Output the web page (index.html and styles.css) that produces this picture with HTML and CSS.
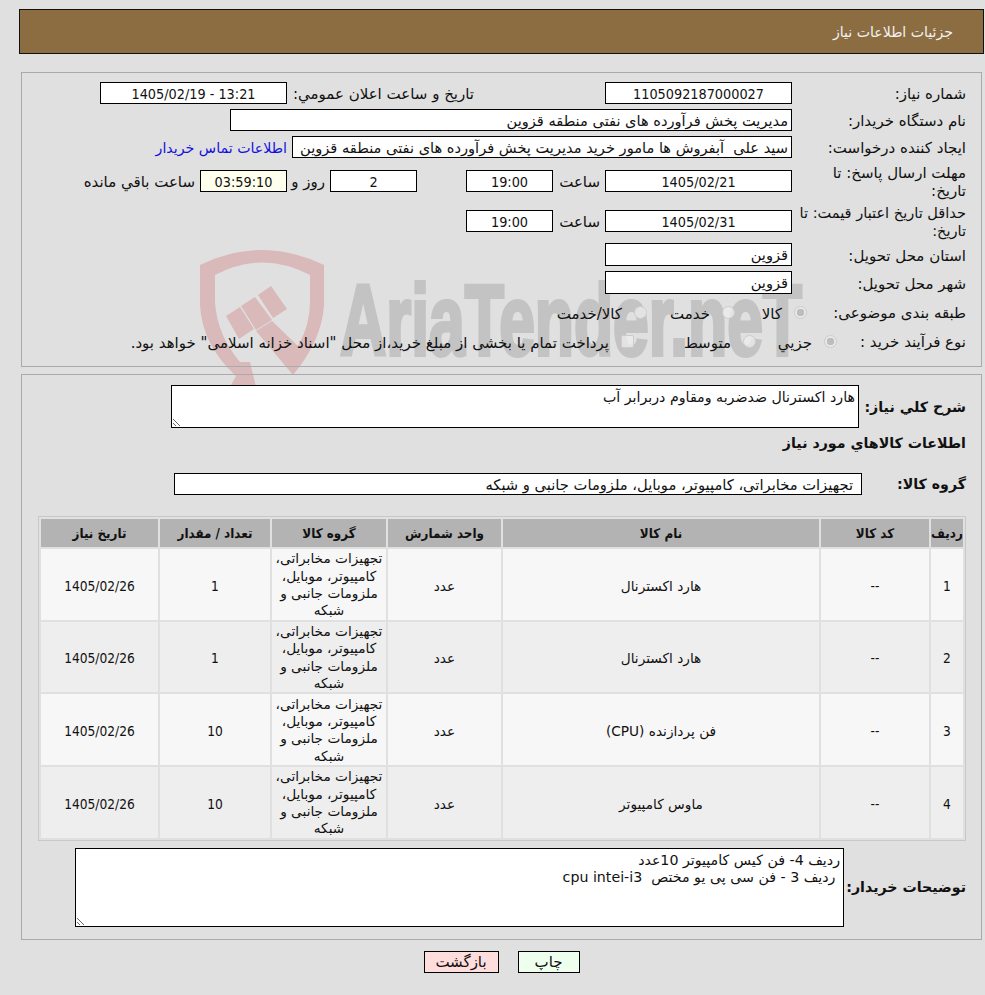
FILE: index.html
```html
<!DOCTYPE html>
<html lang="fa" dir="rtl">
<head>
<meta charset="utf-8">
<title>جزئیات اطلاعات نیاز</title>
<link rel="stylesheet" href="styles.css">
</head>
<body>
<svg class="watermark" viewBox="0 0 985 995" width="985" height="995" aria-hidden="true">
  <path class="wm-red" fill-rule="evenodd" d="M200 265 Q262 235 324 265 L324 305 Q322 340 293 375 L282 360 L272 321 L298 346 Q310 325 310 302 L310 275 Q262 250 215 275 L215 302 Q217 335 240 362 L250 362 L256 387 L231 385 L236 376 Q202 345 200 305 Z"/>
  <path class="wm-red" d="M226 316 L240 307 L254 329 L239 339 Z M241 306 L255 297 L272 320 L256 330 Z M258 295 L271 286 L287 309 L273 318 Z M256 331 L272 321 L300 361 L293 375 Z"/>
  <text class="wm-text" x="340" y="355" textLength="462" lengthAdjust="spacingAndGlyphs" direction="ltr">AriaTender.neT</text>
</svg>
<main class="page">
  <header class="title-bar"><h1 class="title">جزئیات اطلاعات نیاز</h1></header>

  <section class="panel panel-info">
    <div class="row">
      <span class="label">شماره نیاز:</span>
      <div class="box w187 center num">1105092187000027</div>
      <span class="label-public">تاریخ و ساعت اعلان عمومي:</span>
      <div class="box w187 center num">13:21 - 1405/02/19</div>
    </div>
    <div class="row">
      <span class="label">نام دستگاه خریدار:</span>
      <div class="box w562">مدیریت پخش فرآورده های نفتی منطقه قزوین</div>
    </div>
    <div class="row">
      <span class="label">ایجاد کننده درخواست:</span>
      <div class="box w500 nowrap">سید علی&nbsp; آبفروش ها مامور خرید مدیریت پخش فرآورده های نفتی منطقه قزوین</div>
      <a class="contact" href="#">اطلاعات تماس خریدار</a>
    </div>
    <div class="row row-tall">
      <span class="label">مهلت ارسال پاسخ: تا<br>تاریخ:</span>
      <div class="box w187 center num">1405/02/21</div>
      <span class="time-word">ساعت</span>
      <div class="box w87 center num">19:00</div>
      <div class="box w87 center num days">2</div>
      <span class="days-word">روز و</span>
      <div class="box w87 center num remain">03:59:10</div>
      <span class="remain-word">ساعت باقي مانده</span>
    </div>
    <div class="row row-tall">
      <span class="label label-long">حداقل تاریخ اعتبار قیمت: تا<br>تاریخ:</span>
      <div class="box w187 center num">1405/02/31</div>
      <span class="time-word">ساعت</span>
      <div class="box w87 center num">19:00</div>
    </div>
    <div class="row">
      <span class="label">استان محل تحویل:</span>
      <div class="box w187 tall">قزوین</div>
    </div>
    <div class="row">
      <span class="label">شهر محل تحویل:</span>
      <div class="box w187 tall">قزوین</div>
    </div>
    <div class="row row-choice row-subject">
      <span class="label">طبقه بندی موضوعی:</span>
      <label class="choice choice-goods"><input class="radio" type="radio" name="subject" checked disabled><span class="choice-text">کالا</span></label>
      <label class="choice choice-service"><input class="radio" type="radio" name="subject" disabled><span class="choice-text">خدمت</span></label>
      <label class="choice"><input class="radio" type="radio" name="subject" disabled><span class="choice-text">کالا/خدمت</span></label>
    </div>
    <div class="row row-choice row-process">
      <span class="label">نوع فرآیند خرید :</span>
      <label class="choice choice-partial"><input class="radio" type="radio" name="process" checked disabled><span class="choice-text">جزيي</span></label>
      <label class="choice choice-medium"><input class="radio" type="radio" name="process" disabled><span class="choice-text">متوسط</span></label>
      <label class="choice"><input class="check" type="checkbox" disabled><span class="choice-text">پرداخت تمام یا بخشی از مبلغ خرید،از محل "اسناد خزانه اسلامی" خواهد بود.</span></label>
    </div>
  </section>

  <section class="panel panel-goods">
    <div class="form-line">
      <span class="strong-label desc-label">شرح کلي نیاز:</span>
      <textarea class="area area-desc" readonly>هارد اکسترنال ضدضربه ومقاوم دربرابر آب</textarea>
    </div>
    <h2 class="strong-label heading">اطلاعات کالاهاي مورد نیاز</h2>
    <div class="form-line group-row">
      <span class="strong-label group-label">گروه کالا:</span>
      <div class="box w688 group-box">تجهیزات مخابراتی، کامپیوتر، موبایل، ملزومات جانبی و شبکه</div>
    </div>
    <table class="items">
      <thead>
        <tr>
          <th class="c-row">ردیف</th><th class="c-code">کد کالا</th><th class="c-name">نام کالا</th><th class="c-unit">واحد شمارش</th><th class="c-group">گروه کالا</th><th class="c-qty">تعداد / مقدار</th><th class="c-date">تاریخ نیاز</th>
        </tr>
      </thead>
      <tbody>
        <tr><td class="num">1</td><td class="num">--</td><td>هارد اکسترنال</td><td>عدد</td><td class="group-cell">تجهیزات مخابراتی، کامپیوتر، موبایل، ملزومات جانبی و شبکه</td><td class="num">1</td><td class="num">1405/02/26</td></tr>
        <tr><td class="num">2</td><td class="num">--</td><td>هارد اکسترنال</td><td>عدد</td><td class="group-cell">تجهیزات مخابراتی، کامپیوتر، موبایل، ملزومات جانبی و شبکه</td><td class="num">1</td><td class="num">1405/02/26</td></tr>
        <tr><td class="num">3</td><td class="num">--</td><td>فن پردازنده (CPU)</td><td>عدد</td><td class="group-cell">تجهیزات مخابراتی، کامپیوتر، موبایل، ملزومات جانبی و شبکه</td><td class="num">10</td><td class="num">1405/02/26</td></tr>
        <tr><td class="num">4</td><td class="num">--</td><td>ماوس کامپیوتر</td><td>عدد</td><td class="group-cell">تجهیزات مخابراتی، کامپیوتر، موبایل، ملزومات جانبی و شبکه</td><td class="num">10</td><td class="num">1405/02/26</td></tr>
      </tbody>
    </table>
    <div class="form-line notes-row">
      <span class="strong-label notes-label">توضیحات خریدار:</span>
      <textarea class="area area-notes" readonly>ردیف 4- فن کیس کامپیوتر 10عدد
 ردیف 3 - فن سی پی یو مختص  cpu intei-i3</textarea>
    </div>
  </section>

  <div class="actions">
    <button class="btn btn-print" type="button">چاپ</button>
    <button class="btn btn-back" type="button">بازگشت</button>
  </div>
</main>
</body>
</html>
```
FILE: styles.css
```css
* { box-sizing: border-box; }
html, body { margin: 0; padding: 0; height: 995px; overflow: hidden; }
body {
  background: #e0e0e0;
  color: #111;
  font-family: "DejaVu Sans", sans-serif;
  font-size: 15px;
  position: relative;
}
.watermark { position: absolute; left: 0; top: 0; }
.wm-red { fill: #d9b9b9; }
.wm-text { fill: #c3c3c3; stroke: #c3c3c3; stroke-width: 4px; font-family: "Liberation Sans", sans-serif; font-weight: 700; font-size: 100px; }
.page { position: relative; padding: 9px 1px 0 19px; }
.title-bar {
  height: 45px; background: #8c6d42; border: 1px solid #111;
  display: flex; align-items: center; padding-right: 30px;
}
.title { margin: 0; color: #f2f2f2; font-size: 14.1px; font-weight: 400; }

.panel { border: 1px solid #aaa; margin-left: 2px; margin-right: 2px; padding-left: 16px; padding-right: 15px; }
.panel-info { margin-top: 18px; height: 295px; padding-top: 9px; }
.panel-goods { margin-top: 7px; height: 566px; padding-top: 10px; }

.row { display: flex; align-items: center; min-height: 22px; margin-bottom: 5px; }
.row-tall { height: 35px; margin-bottom: 5px; }
.row-choice { height: 24px; margin-bottom: 6px; }
.row-subject { height: 26px; margin-bottom: 4px; }
.label { width: 174px; flex: none; line-height: 18px; white-space: nowrap; padding-top: 2px; }
.label-long { font-size: 14.56px; }
.row-subject .label { width: 159px; }
.row-process .label { width: 129px; }
.box {
  height: 22px; line-height: 22px; border: 1px solid #000; background: #fff;
  padding: 0 3px; flex: none; overflow: hidden; font-size: 14.6px;
}
.num { font-family: "DejaVu Sans Condensed", "DejaVu Sans", sans-serif; font-size: 14.3px; }
.center { text-align: center; }
.nowrap { white-space: nowrap; }
.tall { height: 23px; }
.w187 { width: 187px; }
.w87 { width: 87px; }
.w562 { width: 562px; }
.w500 { width: 500px; }
.w688 { width: 688px; }
.label-public { margin-right: 131px; width: 187px; flex: none; white-space: nowrap; padding-top: 2px; }
.contact { color: #11d; text-decoration: none; margin-right: 5px; white-space: nowrap; font-size: 14.2px; padding-top: 1px; }
.time-word { width: 52px; flex: none; padding: 2px 5px 0 0; }
.days { margin-right: 49px; }
.days-word { width: 43px; flex: none; padding: 2px 5px 0 0; }
.remain { background: #ffffee; }
.remain-word { margin-right: 5px; white-space: nowrap; padding-top: 2px; }

.choice { display: flex; align-items: center; gap: 12px; white-space: nowrap; flex: none; }
.choice-text { padding-top: 4px; }
.choice-goods { width: 72px; }
.choice-service { width: 88px; }
.choice-partial { width: 81px; }
.choice-medium { width: 122px; }
.radio, .check {
  appearance: none; margin: 0; flex: none; width: 13px; height: 13px;
  background: rgba(238,238,238,.75); border: 1px solid #ccc;
}
.radio { border-radius: 50%; }
.check { border-radius: 2px; }
.radio:checked { background: radial-gradient(circle, #bdbdbd 0 3.5px, #e8e8e8 4px); }

.strong-label { font-weight: 700; font-size: 14.2px; white-space: nowrap; flex: none; }
.form-line { display: flex; align-items: center; }
.desc-label { width: 107px; }
.group-label { width: 104px; }
.notes-label { width: 122px; }
.area {
  display: block; flex: none; border: 1px solid #000; background: #fff; color: #111;
  font: inherit; font-size: 14.2px; line-height: 17.3px; padding: 3px 3px 2px; margin: 0; outline: none; resize: both;
}
.area-desc { width: 688px; height: 43px; }
.heading { margin: 5px 0 0; height: 20px; line-height: 20px; }
.group-row { margin-top: 20px; }
.group-box { padding-right: 8px; font-size: 14.7px; }
.items {
  width: 928px; margin-top: 21px; table-layout: fixed; border-collapse: separate; border-spacing: 2px;
  border: 1px solid #c8c8c8;
}
.items th {
  background: #b3b3b3; height: 28px; padding: 1px 0 0; font-size: 13.3px; font-weight: 700;
  font-family: "DejaVu Sans Condensed", "DejaVu Sans", sans-serif;
}
.items td { height: 70.67px; padding: 4px 1px 0; text-align: center; line-height: 17.33px; font-size: 13.7px; }
.items td.group-cell { padding-top: 1.34px; }
.items td.num { font-size: 13.6px; }
.items tbody tr:nth-child(odd) td { background: #f7f7f7; }
.items tbody tr:nth-child(even) td { background: #eeeeee; }
.c-row { width: 32px; }
.c-code { width: 108px; }
.c-name { width: 316px; }
.c-unit { width: 113px; }
.c-group { width: 114px; }
.c-qty { width: 110px; }
.c-date { width: 117px; }
.notes-row { margin-top: 7px; }
.area-notes { width: 769px; height: 79px; }
.actions { display: flex; justify-content: center; gap: 19px; margin-top: 11px; padding-left: 0; }
.btn { height: 22px; border: 1px solid #000; font: inherit; color: #111; padding: 0; }
.btn-print { width: 62px; background: #eeffee; }
.btn-back { width: 75px; background: #ffdddd; }
```
